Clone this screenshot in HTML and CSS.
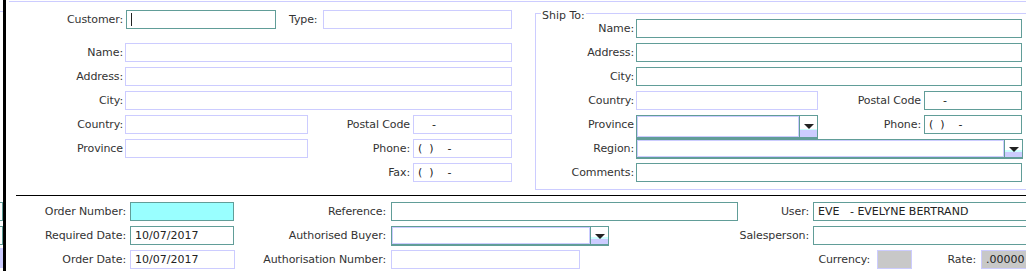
FILE: index.html
```html
<!DOCTYPE html>
<html lang="en">
<head>
    <meta charset="UTF-8">
    <title>Sales Order</title>
    <link rel="stylesheet" href="styles.css">
</head>
<body>

<div class="app">
    <div class="edge">
        <div class="edge-line"></div>
        <div class="edge-box first"></div>
        <div class="edge-box"></div>
        <div class="edge-fill"></div>
    </div>
    <div class="bar"></div>

    <div class="main">
        <div class="top">
            <!-- Customer panel -->
            <div class="customer">
                <div class="row">
                    <label class="lbl c-lbl">Customer:</label>
                    <div class="fld teal c-cust"><span class="caret"></span></div>
                    <label class="lbl c-type-lbl">Type:</label>
                    <div class="fld c-type"></div>
                </div>
                <div class="row gap-big">
                    <label class="lbl c-lbl">Name:</label>
                    <div class="fld c-wide"></div>
                </div>
                <div class="row">
                    <label class="lbl c-lbl">Address:</label>
                    <div class="fld c-wide"></div>
                </div>
                <div class="row">
                    <label class="lbl c-lbl">City:</label>
                    <div class="fld c-wide"></div>
                </div>
                <div class="row">
                    <label class="lbl c-lbl">Country:</label>
                    <div class="fld c-half"></div>
                    <label class="lbl c-mid-lbl">Postal Code</label>
                    <div class="fld c-small">    -</div>
                </div>
                <div class="row">
                    <label class="lbl c-lbl">Province</label>
                    <div class="fld c-half"></div>
                    <label class="lbl c-mid-lbl">Phone:</label>
                    <div class="fld c-small">(  )    -</div>
                </div>
                <div class="row">
                    <span class="c-spacer"></span>
                    <label class="lbl c-mid-lbl">Fax:</label>
                    <div class="fld c-small">(  )    -</div>
                </div>
            </div>

            <!-- Ship To panel -->
            <div class="shipto">
                <span class="legend">Ship To:</span>
                <div class="row">
                    <label class="lbl s-lbl">Name:</label>
                    <div class="fld teal s-wide"></div>
                </div>
                <div class="row">
                    <label class="lbl s-lbl">Address:</label>
                    <div class="fld teal s-wide"></div>
                </div>
                <div class="row">
                    <label class="lbl s-lbl">City:</label>
                    <div class="fld teal s-wide"></div>
                </div>
                <div class="row">
                    <label class="lbl s-lbl">Country:</label>
                    <div class="fld s-half"></div>
                    <label class="lbl s-mid-lbl">Postal Code</label>
                    <div class="fld teal s-small">    -</div>
                </div>
                <div class="row">
                    <label class="lbl s-lbl">Province</label>
                    <div class="combo s-half tall">
                        <div class="combo-text"></div>
                        <div class="combo-btn"><svg width="10" height="5"><polygon points="0,0 10,0 5,5" fill="#222"/></svg></div>
                    </div>
                    <label class="lbl s-mid-lbl">Phone:</label>
                    <div class="fld teal s-small">(  )    -</div>
                </div>
                <div class="row">
                    <label class="lbl s-lbl">Region:</label>
                    <div class="combo s-region">
                        <div class="combo-text"></div>
                        <div class="combo-btn"><svg width="10" height="5"><polygon points="0,0 10,0 5,5" fill="#222"/></svg></div>
                    </div>
                </div>
                <div class="row">
                    <label class="lbl s-lbl">Comments:</label>
                    <div class="fld teal s-wide"></div>
                </div>
            </div>
        </div>

        <div class="rule"></div>

        <!-- Order details -->
        <div class="order">
            <label class="lbl o-lbl1">Order Number:</label>
            <div class="fld teal cyan"></div>
            <label class="lbl o-lbl2">Reference:</label>
            <div class="fld teal o-ref"></div>
            <label class="lbl o-lbl3">User:</label>
            <div class="fld teal o-last">EVE   - EVELYNE BERTRAND</div>

            <label class="lbl o-lbl1">Required Date:</label>
            <div class="fld teal">10/07/2017</div>
            <label class="lbl o-lbl2">Authorised Buyer:</label>
            <div class="combo o-buyer">
                <div class="combo-text"></div>
                <div class="combo-btn"><svg width="10" height="5"><polygon points="0,0 10,0 5,5" fill="#222"/></svg></div>
            </div>
            <label class="lbl o-lbl3">Salesperson:</label>
            <div class="fld teal o-last"></div>

            <label class="lbl o-lbl1">Order Date:</label>
            <div class="fld o-date">10/07/2017</div>
            <label class="lbl o-lbl2">Authorisation Number:</label>
            <div class="fld o-auth"></div>
            <div class="rates">
                <label class="lbl r-cur-lbl">Currency:</label>
                <div class="fld grey r-cur"></div>
                <label class="lbl r-rate-lbl">Rate:</label>
                <div class="fld grey r-rate">.00000</div>
            </div>
        </div>
    </div>
</div>

</body>
</html>
```

FILE: styles.css
```css
body {
    margin: 0;
    background: #fff;
    font-family: "DejaVu Sans", sans-serif;
    font-size: 11px;
    color: #333;
}

.app {
    display: flex;
    height: 271px;
    overflow: hidden;
}

/* sliver of the neighbouring panel + splitter */
.edge {
    width: 3px;
    flex: none;
    display: flex;
    flex-direction: column;
}

.edge-line {
    margin-top: 11px;
    height: 1px;
    background: #ccccff;
}

.edge-box {
    margin-top: 5px;
    height: 19px;
    box-sizing: border-box;
    border: 1px solid #619d98;
    border-left: none;
}

.edge-box.first {
    margin-top: 190px;
}

.edge-fill {
    margin-top: 3px;
    height: 20px;
    background: #ccccff;
}

.bar {
    width: 3px;
    flex: none;
    background: #000;
}

.main {
    flex: 1;
    min-width: 0;
    overflow: hidden;
    padding-top: 1px;
}

/* Top section */
.top {
    margin-left: 3px;
    border-top: 1px solid #ccccff;
    display: flex;
    align-items: flex-start;
}

.row {
    display: flex;
    align-items: center;
    height: 19px;
}

.row + .row {
    margin-top: 5px;
}

.row.gap-big {
    margin-top: 14px;
}

.lbl {
    flex: none;
    text-align: right;
    white-space: nowrap;
    letter-spacing: -0.1px;
}

.fld {
    flex: none;
    height: 19px;
    box-sizing: border-box;
    border: 1px solid #ccccff;
    background: #fff;
    padding: 0 4px;
    line-height: 17px;
    white-space: pre;
    color: #222;
    overflow: hidden;
}

.fld.teal {
    border-color: #619d98;
}

.fld.cyan {
    background: #99ffff;
}

.fld.grey {
    background: #c8c8c8;
}

.caret {
    display: inline-block;
    width: 1px;
    height: 13px;
    margin-top: 2px;
    background: #222;
    vertical-align: top;
}

/* Customer panel */
.customer {
    width: 503px;
    flex: none;
    padding-top: 8px;
}

.c-lbl {
    width: 114px;
    margin-right: 2px;
}

.c-cust {
    width: 150px;
    margin-left: 1px;
}

.c-type-lbl {
    width: 27px;
    margin-left: 13px;
    margin-right: 7px;
}

.c-type {
    width: 189px;
}

.c-wide {
    width: 387px;
}

.c-half {
    width: 183px;
}

.c-spacer {
    width: 299px;
    flex: none;
}

.c-mid-lbl {
    width: 102px;
    margin-right: 3px;
}

.c-small {
    width: 99px;
}

/* Ship To panel */
.shipto {
    position: relative;
    flex: 1;
    margin-left: 23px;
    margin-top: 11px;
    border: 1px solid #ccccff;
    border-right: none;
    padding: 5px 0 7px 0;
}

.legend {
    position: absolute;
    top: -5px;
    left: 5px;
    padding: 0 1px;
    background: #fff;
    line-height: 13px;
}

.s-lbl {
    width: 98px;
    margin-right: 2px;
}

.s-wide {
    width: 386px;
}

.s-half {
    width: 182px;
}

.s-mid-lbl {
    width: 103px;
    margin-right: 3px;
}

.s-small {
    width: 98px;
}

.s-region {
    width: 387px;
}

/* Combo boxes */
.combo {
    flex: none;
    align-self: flex-start;
    display: flex;
    height: 20px;
    box-sizing: border-box;
    border: 1px solid #619d98;
    border-bottom-width: 2px;
    background: #fff;
}

.combo.tall {
    height: 24px;
}

.combo-text {
    flex: 1;
    border: 1px solid #ccccff;
    background: #fff;
}

.combo-btn {
    width: 18px;
    flex: none;
    border-left: 1px solid #619d98;
    display: flex;
    justify-content: center;
    align-items: flex-start;
    padding-top: 7px;
    box-sizing: border-box;
    background: linear-gradient(to bottom, #fff 0, #fff 60%, #ccffff 60%, #ccffff 68%, #ccccff 68%);
}

.combo.tall .combo-btn {
    padding-top: 8px;
}

/* Divider */
.rule {
    margin: 5px 0 0 10px;
    border-top: 1px solid #000;
}

/* Order details */
.order {
    margin-top: 6px;
    display: grid;
    grid-template-columns: 124px 104px 157px 347px 75px 1fr;
    grid-auto-rows: 19px;
    row-gap: 5px;
    align-items: center;
}

.order .fld {
    width: 100%;
}

.o-lbl1 {
    padding-right: 4px;
}

.o-lbl2 {
    padding-right: 5px;
}

.o-lbl3 {
    padding-right: 4px;
}

.order .o-date {
    width: 105px;
}

.order .o-auth {
    width: 189px;
}

.order .o-last {
    width: calc(100% + 10px);
}

.o-buyer {
    width: 218px;
}

.rates {
    grid-column: 5 / 7;
    display: flex;
    align-items: center;
}

.r-cur-lbl {
    width: 132px;
    margin-right: 7px;
}

.order .r-cur {
    width: 35px;
}

.r-rate-lbl {
    width: 64px;
    margin-right: 5px;
}

.order .r-rate {
    flex: 1;
    width: auto;
    margin-right: -10px;
}
```
